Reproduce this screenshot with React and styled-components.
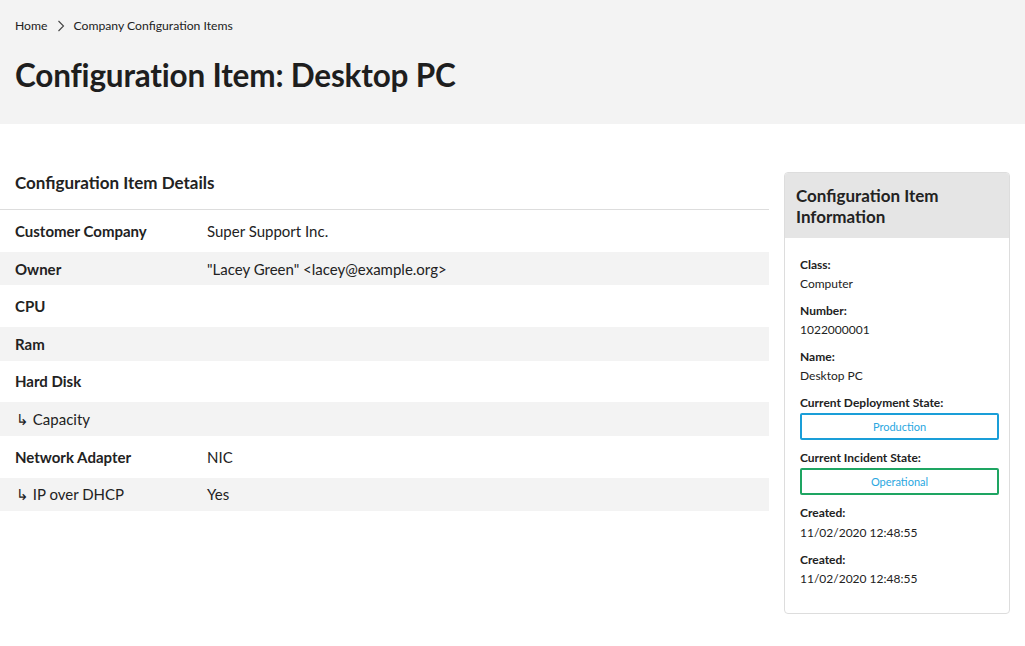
import React from 'react'
import styled, { createGlobalStyle } from 'styled-components'

const Global = createGlobalStyle`
  body {
    margin: 0;
    font-family: Lato, "Open Sans", sans-serif;
    color: #222;
    background: #fff;
  }
`

const rows = [
  { label: 'Customer Company', value: 'Super Support Inc.' },
  { label: 'Owner', value: '"Lacey Green" <lacey@example.org>' },
  { label: 'CPU', value: '' },
  { label: 'Ram', value: '' },
  { label: 'Hard Disk', value: '' },
  { label: 'Capacity', value: '', sub: true },
  { label: 'Network Adapter', value: 'NIC' },
  { label: 'IP over DHCP', value: 'Yes', sub: true },
]

const App = () => {
  return (
    <>
      <Global />
      <Header>
        <Breadcrumb>
          <span>Home</span>
          <svg width="12" height="14" viewBox="0 0 12 14">
            <path d="M3.5 2 L8.5 7 L3.5 12" fill="none" stroke="#444" strokeWidth="1.1" />
          </svg>
          <span>Company Configuration Items</span>
        </Breadcrumb>
        <Title>Configuration Item: Desktop PC</Title>
      </Header>
      <Main>
        <Details>
          <SectionTitle>Configuration Item Details</SectionTitle>
          {rows.map((r, i) => (
            <Row key={r.label} $alt={i % 2 === 1}>
              <Label $sub={r.sub}>{r.sub ? '↳ ' : ''}{r.label}</Label>
              <Value>{r.value}</Value>
            </Row>
          ))}
        </Details>
        <Sidebar>
          <SideHead>Configuration Item Information</SideHead>
          <SideBody>
            <Field><FLabel>Class:</FLabel><FValue>Computer</FValue></Field>
            <Field><FLabel>Number:</FLabel><FValue>1022000001</FValue></Field>
            <Field><FLabel>Name:</FLabel><FValue>Desktop PC</FValue></Field>
            <Field><FLabel>Current Deployment State:</FLabel><State $color="#1a9ed8">Production</State></Field>
            <Field><FLabel>Current Incident State:</FLabel><State $color="#1ea562">Operational</State></Field>
            <Field><FLabel>Created:</FLabel><FValue $gap>11/02/2020 12:48:55</FValue></Field>
            <Field><FLabel>Created:</FLabel><FValue>11/02/2020 12:48:55</FValue></Field>
          </SideBody>
        </Sidebar>
      </Main>
    </>
  )
}

export default App

const Header = styled.div`
  background: #f3f3f3;
  height: 124px;
  padding: 17px 15px 0;
  box-sizing: border-box;
`
const Breadcrumb = styled.div`
  display: flex;
  align-items: center;
  gap: 7px;
  font-size: 12.2px;
  line-height: 18px;
  color: #222;
`
const Title = styled.h1`
  margin: 20px 0 0;
  font-size: 31.5px;
  line-height: 40px;
  font-weight: 700;
  letter-spacing: -0.2px;
  color: #1e1e1e;
`
const Main = styled.div`
  display: flex;
  align-items: flex-start;
  gap: 15px;
  padding: 48px 15px 0 0;
`
const Details = styled.div`
  flex: 1;
`
const SectionTitle = styled.h2`
  margin: 0;
  padding: 0 15px 15px;
  font-size: 17px;
  line-height: 22px;
  font-weight: 700;
  border-bottom: 1px solid #ddd;
`
const Row = styled.div`
  display: grid;
  grid-template-columns: 192px 1fr;
  align-items: center;
  padding: 0 15px;
  height: ${p => (p.$alt ? '33.5px' : '41.75px')};
  background: ${p => (p.$alt ? '#f3f3f3' : '#fff')};
  font-size: 15px;
`
const Label = styled.div`
  font-weight: ${p => (p.$sub ? 400 : 700)};
  padding-left: ${p => (p.$sub ? '1px' : '0')};
`
const Value = styled.div``
const Sidebar = styled.div`
  width: 226px;
  box-sizing: border-box;
  flex-shrink: 0;
  border: 1px solid #ddd;
  border-radius: 4px;
  overflow: hidden;
`
const SideHead = styled.div`
  background: #e5e5e5;
  padding: 12px 12px 11px 11px;
  font-size: 17px;
  line-height: 21px;
  font-weight: 700;
`
const SideBody = styled.div`
  padding: 17px 10px 25px 15px;
  display: flex;
  flex-direction: column;
  gap: 8px;
`
const Field = styled.div`
  font-size: 12px;
  line-height: 19px;
`
const FLabel = styled.div`
  font-weight: 700;
`
const FValue = styled.div`
  margin-top: ${p => (p.$gap ? '1px' : '0')};
`
const State = styled.div`
  margin-top: 1px;
  border: 2px solid ${p => p.$color};
  border-radius: 2px;
  height: 27px;
  box-sizing: border-box;
  display: flex;
  align-items: center;
  justify-content: center;
  color: #2aa7df;
  font-size: 11px;
`
